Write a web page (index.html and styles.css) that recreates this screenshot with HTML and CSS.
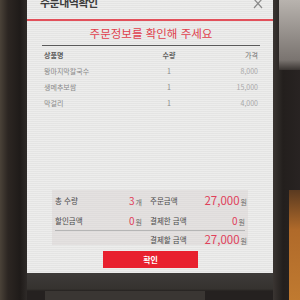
FILE: index.html
```html
<!DOCTYPE html>
<html lang="ko">
<head>
  <meta charset="UTF-8">
  <meta name="viewport" content="width=device-width, initial-scale=1.0">
  <title>주문내역확인</title>
  <link rel="stylesheet" href="styles.css">
</head>
<body>
  <div class="kiosk">
    <div class="bezel-left"></div>
    <div class="center">
      <div class="screen">
        <div class="topbar">
          <span class="top-title">주문내역확인</span>
          <svg class="close" width="10" height="10" viewBox="0 0 10 10">
            <path d="M1 -1 L9 8 M9 -1 L1 8" stroke="#8a8a8a" stroke-width="1.2" fill="none"/>
          </svg>
        </div>
        <h1 class="title">주문정보를 확인해 주세요</h1>

        <div class="table">
          <div class="row head">
            <span class="name">상품명</span>
            <span class="qty">수량</span>
            <span class="price">가격</span>
          </div>
          <div class="row">
            <span class="name">왕마지막칼국수</span>
            <span class="qty">1</span>
            <span class="price">8,000</span>
          </div>
          <div class="row">
            <span class="name">생메추보쌈</span>
            <span class="qty">1</span>
            <span class="price">15,000</span>
          </div>
          <div class="row">
            <span class="name">막걸리</span>
            <span class="qty">1</span>
            <span class="price">4,000</span>
          </div>
        </div>

        <div class="summary">
          <div class="line">
            <span class="label">총 수량</span>
            <span class="value small"><b>3</b>개</span>
            <span class="label right">주문금액</span>
            <span class="value"><b>27,000</b>원</span>
          </div>
          <div class="line ruled">
            <span class="label">할인금액</span>
            <span class="value small"><b>0</b>원</span>
            <span class="label right">결제한 금액</span>
            <span class="value small"><b>0</b>원</span>
          </div>
          <div class="line last">
            <span class="label"></span>
            <span class="value"></span>
            <span class="label right">결제할 금액</span>
            <span class="value"><b>27,000</b>원</span>
          </div>
        </div>

        <button type="button" class="ok">확인</button>
      </div>
      <div class="base">
        <div class="slot"></div>
      </div>
    </div>
    <div class="bezel-right">
      <div class="wall"></div>
      <div class="wood"></div>
    </div>
  </div>
</body>
</html>
```

FILE: styles.css
```css
body {
  margin: 0;
  font-family: "Noto Sans CJK KR", "Noto Sans", sans-serif;
  background-color: #2a2522;
}

.kiosk {
  display: flex;
  width: 300px;
  height: 300px;
  overflow: hidden;
}

.bezel-left {
  width: 27px;
  background: linear-gradient(to right, #4a4238 0px, #2c2622 8px, #1f1b19 20px, #2e2a28 27px);
}

.center {
  width: 246px;
  display: flex;
  flex-direction: column;
}

.screen {
  height: 273px;
  flex-shrink: 0;
  background-color: #e9e9e8;
  background-image: repeating-linear-gradient(to bottom, rgba(255, 255, 255, 0.18) 0px, rgba(255, 255, 255, 0.18) 1px, rgba(0, 0, 0, 0.02) 1px, rgba(0, 0, 0, 0.02) 2px);
  display: flex;
  flex-direction: column;
  overflow: hidden;
}

.screen > * {
  flex-shrink: 0;
}

.topbar {
  height: 19px;
  border-bottom: 2px solid #e2505a;
  display: flex;
  justify-content: space-between;
  align-items: flex-start;
  padding: 0 10px 0 13px;
}

.top-title {
  margin-top: -5px;
  font-size: 11px;
  line-height: 14px;
  font-weight: bold;
  color: #3c3c3c;
  letter-spacing: -0.5px;
}

.title {
  margin: 0 13px 0 15px;
  height: 24px;
  line-height: 24px;
  font-size: 11.5px;
  font-weight: normal;
  color: #e0404c;
  text-align: center;
  border-bottom: 1px solid #5a5a5a;
}

.table {
  margin: 0 13px 0 15px;
  padding-top: 1px;
}

.row {
  display: grid;
  grid-template-columns: 112px 30px 1fr;
  height: 16px;
  align-items: center;
  font-size: 7px;
  color: #8a8a8a;
}

.row.head {
  color: #606060;
  font-weight: bold;
}

.name {
  padding-left: 2px;
}

.qty {
  text-align: center;
}

.price {
  text-align: right;
  padding-right: 2px;
  color: #a8a8a8;
}

.row.head .price {
  color: #707070;
  font-weight: normal;
}

.summary {
  margin: 79px 0 0 25px;
  width: 192px;
  padding: 0 1px 0 3px;
  background-color: rgba(215, 208, 208, 0.4);
  font-size: 7.5px;
}

.line {
  display: grid;
  grid-template-columns: 65px 22px 55px 50px;
  height: 20px;
  align-items: center;
}

.line.ruled {
  border-bottom: 1px solid #b5b5b5;
  margin-right: 2px;
  grid-template-columns: 65px 22px 55px 48px;
}

.line.last {
  height: 14px;
}

.summary .label {
  color: #4a4a4a;
}

.summary .label.right {
  padding-left: 8px;
}

.summary .value {
  text-align: right;
  color: #6a6a6a;
  font-size: 7px;
  white-space: nowrap;
}

.summary .value b {
  font-weight: normal;
  font-size: 11.5px;
  color: #e0405a;
  margin-right: 1px;
}

.summary .value.small b {
  font-size: 10px;
}

.ok {
  align-self: flex-start;
  margin: 6px 0 0 76px;
  width: 95px;
  height: 17px;
  border: none;
  background-color: #e8202e;
  color: white;
  font-family: inherit;
  font-size: 8px;
  font-weight: bold;
  padding: 0;
}

.base {
  flex: 1;
  background: linear-gradient(to bottom, #3e3b39 0px, #35322f 16px, #252120 18px);
  padding: 18px 0 0 18px;
}

.slot {
  width: 160px;
  height: 10px;
  background-color: #3a3633;
}

.bezel-right {
  width: 27px;
  display: flex;
  flex-direction: column;
  background: linear-gradient(to right, #3a3532 0px, #231f1d 10px, #282322 27px);
}

.wall {
  height: 70px;
  margin-left: 6px;
  background: linear-gradient(to bottom, #b8b3ae, #7a7470 60px, #3a3532);
}

.wood {
  margin-top: auto;
  margin-left: 16px;
  height: 110px;
  background: linear-gradient(to bottom, #5a3a20, #b06a2a 40px, #c07a30);
}
```
